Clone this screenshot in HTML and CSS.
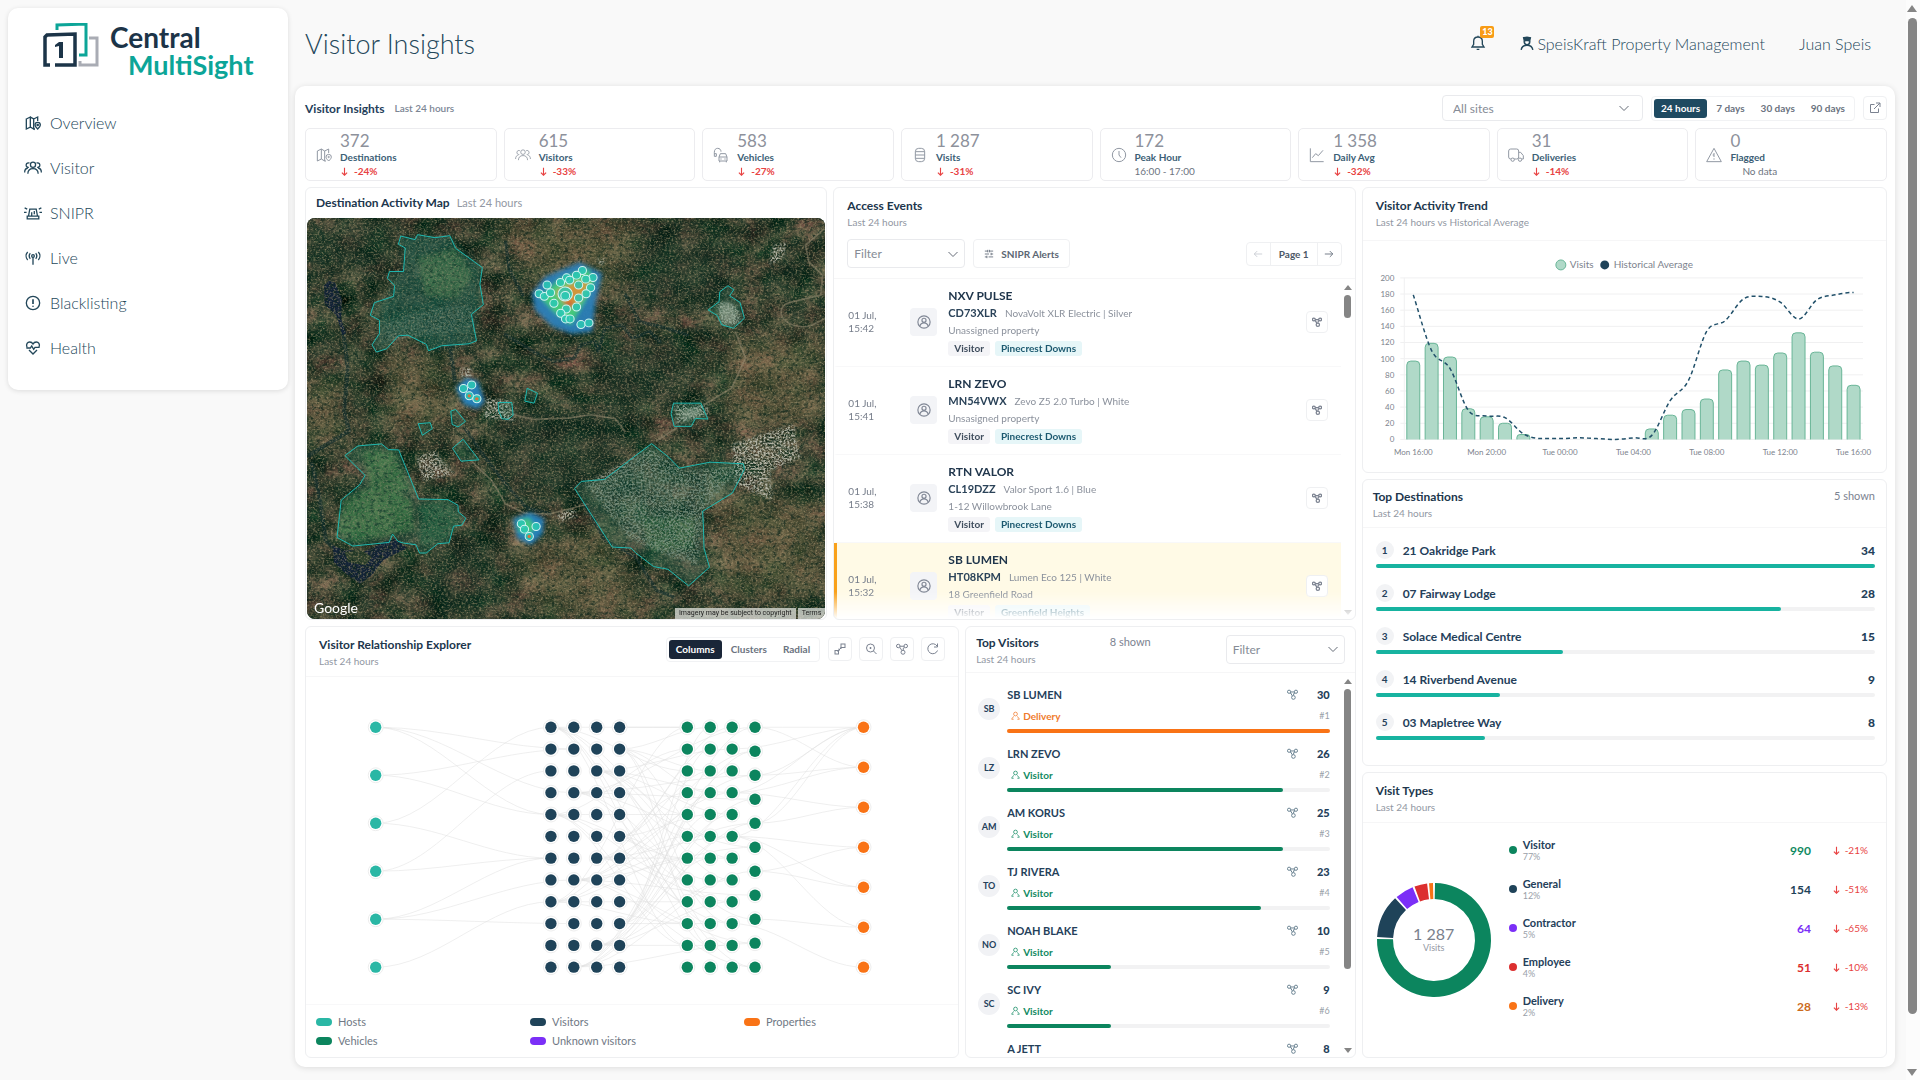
FILE: index.html
```html
<!DOCTYPE html>
<html lang="en">
<head>
  <meta charset="UTF-8">
  <title>Visitor Insights - Central MultiSight</title>
  <meta name="viewport" content="width=device-width, initial-scale=1.0">
  <link rel="stylesheet" href="styles.css">
</head>
<body>
  <!-- Icon sprite -->
  <svg class="sprite" aria-hidden="true">
    <symbol id="i-map" viewBox="0 0 24 24"><path d="M2 6l6-3v15l-6 3zM8 3l5 3v15l-5-3M13 6l6-3v6M13 21h2"/><path d="M19 21c-3-3-4-4.500-4-6a4 4 0 0 1 8 0c0 1.500-1 3-4 6z"/><circle cx="19" cy="15" r="1"/></symbol>
    <symbol id="i-users" viewBox="0 0 28 24"><circle cx="14" cy="7" r="4"/><path d="M6 21c0-5 3-8 8-8s8 3 8 8M7.500 11a3.500 3.500 0 1 1 1-6.500M20.500 11a3.500 3.500 0 1 0-1-6.500M1 19c0-4 2-6.500 5-7M27 19c0-4-2-6.500-5-7"/></symbol>
    <symbol id="i-siren" viewBox="0 0 28 24"><path d="M7 17l2-11h10l2 11M5 17h18v4H5zM1 4l4 2M27 4l-4 2M0 11h4M24 11h4M12 17v-6M16 9v5"/></symbol>
    <symbol id="i-live" viewBox="0 0 24 24"><circle cx="12" cy="9" r="2"/><path d="M12 11v11M8 13a5.500 5.500 0 0 1 0-8M16 13a5.500 5.500 0 0 0 0-8M4 15a9 9 0 0 1 0-12M20 15a9 9 0 0 0 0-12"/></symbol>
    <symbol id="i-alert" viewBox="0 0 24 24"><circle cx="12" cy="12" r="10"/><path d="M12 6.500v7M12 16v1.500" stroke-width="2.500"/></symbol>
    <symbol id="i-heart" viewBox="0 0 24 24"><path d="M3 11C1 6 4 3 7 3c2 0 4 1 5 3 1-2 3-3 5-3 3 0 6 3 4 8M6 15l6 6 6-6M2 12h6l2-3 3 5 2-3h7"/></symbol>
    <symbol id="i-bell" viewBox="0 0 24 24"><path d="M3 18h18l-2.500-4V9.500C18.500 5.500 16 3 12 3S5.500 5.500 5.500 9.500V14zM10 21.500h4M12 1v2"/></symbol>
    <symbol id="i-guard" viewBox="0 0 24 24"><path d="M6 2l6-1 6 1-1 4v3a5 5 0 0 1-10 0V6z" fill="currentColor"/><path d="M9 8h6v2a3 3 0 0 1-6 0z" fill="#fff" stroke="none"/><path d="M2 23c1-6 4-8 10-8s9 2 10 8" stroke-width="2.500"/></symbol>
    <symbol id="i-chevron" viewBox="0 0 24 24"><path d="M3 8l9 9 9-9"/></symbol>
    <symbol id="i-export" viewBox="0 0 24 24"><path d="M11 5H3v16h16v-8M14 2h8v8M22 2L10 14"/></symbol>
    <symbol id="i-car" viewBox="0 0 24 24"><path d="M2 14V8c0-4 2-6 5-6s5 2 5 5M2 14h3v-4H2M9 21v-6l2-5h8l2 5v6zM9 15h12M11 18h2M17 18h2M10 21v2M20 21v2"/></symbol>
    <symbol id="i-db" viewBox="0 0 24 24"><rect x="5" y="2" width="14" height="20" rx="5"/><path d="M5 7h14M5 12h14M5 17h14"/></symbol>
    <symbol id="i-clock" viewBox="0 0 24 24"><circle cx="12" cy="12" r="10"/><path d="M12 6v6l3 4"/></symbol>
    <symbol id="i-chart" viewBox="0 0 24 24"><path d="M2 2v20h20M5 16l5-6 4 3 7-8"/></symbol>
    <symbol id="i-truck" viewBox="0 0 24 24"><rect x="1" y="3" width="15" height="15" rx="3"/><path d="M16 8h3l4 5v5h-3"/><circle cx="7" cy="19" r="2.500" fill="#fff"/><circle cx="18" cy="19" r="2.500" fill="#fff"/></symbol>
    <symbol id="i-warn" viewBox="0 0 24 24"><path d="M12 2l11 20H1zM12 9v6M12 17v2M10 12h2"/></symbol>
    <symbol id="i-net" viewBox="0 0 24 24"><circle cx="4.500" cy="6" r="3.500"/><circle cx="19.500" cy="6" r="3.500"/><circle cx="14" cy="18.500" r="4"/><path d="M8 6.500h8M9 10.500l2.500 4.500M14.500 10.500V14M7 9.500l3 1M17 9.500l-3 1"/></symbol>
    <symbol id="i-person" viewBox="0 0 24 24"><circle cx="12" cy="8" r="5"/><path d="M2 22c1-4 3-6 6-7M22 22c-1-4-3-6-6-7M2 22h5M22 22h-5"/></symbol>
    <symbol id="i-avatar" viewBox="0 0 24 24"><circle cx="12" cy="12" r="10.500"/><circle cx="12" cy="9" r="3.500"/><path d="M5 19c1-4 3-5.500 7-5.500s6 1.500 7 5.500"/></symbol>
    <symbol id="i-down" viewBox="0 0 24 24"><path d="M12 2v19M5 15l7 7 7-7"/></symbol>
    <symbol id="i-left" viewBox="0 0 24 24"><path d="M22 12H3M10 5l-7 7 7 7"/></symbol>
    <symbol id="i-right" viewBox="0 0 24 24"><path d="M2 12h19M14 5l7 7-7 7"/></symbol>
    <symbol id="i-sliders" viewBox="0 0 24 24"><path d="M2 5h7M13 5h9M2 12h10M17 12h5M2 19h5M11 19h11M9 2v6M17 9v6M7 16v6M13 2v6"/></symbol>
    <symbol id="i-expand" viewBox="0 0 24 24"><rect x="14" y="2" width="8" height="7"/><rect x="2" y="15" width="7" height="7"/><path d="M9 15l5-5M10 11v5H6M14 12V8"/></symbol>
    <symbol id="i-zoom" viewBox="0 0 24 24"><circle cx="11" cy="10" r="8"/><path d="M17 16l6 6M11 8v4M9 10h4"/></symbol>
    <symbol id="i-refresh" viewBox="0 0 24 24"><path d="M20 6a10 10 0 1 0 1 9M21 1v7h-7"/></symbol>
  </svg>

  <div class="app">
    <aside class="sidebar">
      <a class="logo" href="#">
        <svg class="logo-mark" viewBox="0 0 56 45" aria-hidden="true">
          <path d="M46 15h8v27H37v-4" fill="none" stroke="#a9acb4" stroke-width="3"/>
          <path d="M14 7V2l29-1v31h-7" fill="none" stroke="#0ca598" stroke-width="3"/>
          <path d="M7 42H2V14l2-2 28-1v31H12" fill="none" stroke="#1c3448" stroke-width="3.500"/>
          <path d="M12 22l4-3h4v16h-4V23l-4 1z" fill="#1c3448"/>
        </svg>
        <span class="logo-text"><b>Central</b><b class="logo-sub">MultiSight</b></span>
      </a>
      <nav class="menu">
        <a href="#"><svg class="icon"><use href="#i-map"/></svg>Overview</a>
        <a href="#"><svg class="icon"><use href="#i-users"/></svg>Visitor</a>
        <a href="#"><svg class="icon"><use href="#i-siren"/></svg>SNIPR</a>
        <a href="#"><svg class="icon"><use href="#i-live"/></svg>Live</a>
        <a href="#"><svg class="icon"><use href="#i-alert"/></svg>Blacklisting</a>
        <a href="#"><svg class="icon"><use href="#i-heart"/></svg>Health</a>
      </nav>
    </aside>

    <div class="main">
      <header class="header">
        <h1>Visitor Insights</h1>
        <button class="bell" type="button" aria-label="Notifications"><svg class="icon"><use href="#i-bell"/></svg><span class="badge">13</span></button>
        <a class="company" href="#"><svg class="icon"><use href="#i-guard"/></svg>SpeisKraft Property Management</a>
        <a class="user" href="#">Juan Speis</a>
      </header>

      <main class="panel">
        <div class="toolbar">
          <h2>Visitor Insights</h2>
          <span class="toolbar-sub">Last 24 hours</span>
          <label class="select site-select"><select aria-label="Site"><option>All sites</option></select><svg class="icon"><use href="#i-chevron"/></svg></label>
          <div class="segmented">
            <button class="active" type="button">24 hours</button><button type="button">7 days</button><button type="button">30 days</button><button type="button">90 days</button>
          </div>
          <button class="icon-button" type="button" aria-label="Open"><svg class="icon"><use href="#i-export"/></svg></button>
        </div>

        <section class="stats" id="stats"></section>

        <div class="board">
          <div class="board-left">
            <div class="row-top">
              <!-- Map -->
              <section class="card map-card">
                <div class="map-head"><h3>Destination Activity Map</h3><span>Last 24 hours</span></div>
                <div class="map">
                  <svg class="map-svg" viewBox="0 0 521 403" preserveAspectRatio="xMidYMid slice" role="img" aria-label="Satellite map">
                    <defs>
                      <filter id="terrain" x="0" y="0" width="100%" height="100%" color-interpolation-filters="sRGB">
                        <feTurbulence type="fractalNoise" baseFrequency="0.035 0.045" numOctaves="7" seed="8"/>
                        <feColorMatrix values="0.75 0 0 0 -0.16  0.42 0.2 0 0 -0.06  0.38 0.1 0 0 -0.06  0 0 0 0 1"/>
                      </filter>
                      <filter id="grain" x="0" y="0" width="100%" height="100%" color-interpolation-filters="sRGB">
                        <feTurbulence type="fractalNoise" baseFrequency="0.45 0.55" numOctaves="4" seed="3"/>
                        <feColorMatrix values="0 0 0 0 0.62  0 0 0 0 0.56  0 0 0 0 0.42  2.4 0 0 0 -1.1"/>
                      </filter>
                      <filter id="shade" x="0" y="0" width="100%" height="100%" color-interpolation-filters="sRGB">
                        <feTurbulence type="fractalNoise" baseFrequency="0.22 0.3" numOctaves="4" seed="14"/>
                        <feColorMatrix values="0 0 0 0 0.05  0 0 0 0 0.15  0 0 0 0 0.11  3 0 0 0 -1.35"/>
                      </filter>
                      <filter id="ridges" x="0" y="0" width="100%" height="100%" color-interpolation-filters="sRGB">
                        <feTurbulence type="turbulence" baseFrequency="0.03 0.022" numOctaves="5" seed="21"/>
                        <feColorMatrix values="0 0 0 0 0.06  0 0 0 0 0.19  0 0 0 0 0.14  -5 0 0 0 1.1"/>
                      </filter>
                      <filter id="urban" x="-5%" y="-5%" width="110%" height="110%" color-interpolation-filters="sRGB">
                        <feGaussianBlur in="SourceGraphic" stdDeviation="4" result="area"/>
                        <feTurbulence type="fractalNoise" baseFrequency="0.17" numOctaves="3" seed="5"/>
                        <feColorMatrix values="0 0 0 0 0.7  0 0 0 0 0.7  0 0 0 0 0.64  3.5 0 0 0 -1.4"/>
                        <feComposite in2="area" operator="in"/>
                      </filter>
                      <filter id="soft" x="-30%" y="-30%" width="160%" height="160%"><feGaussianBlur stdDeviation="6"/></filter>
                      <filter id="wide" x="-30%" y="-30%" width="160%" height="160%"><feGaussianBlur stdDeviation="26"/></filter>
                    </defs>
                    <rect width="521" height="403" fill="#2c3a2b"/>
                    <rect width="521" height="403" filter="url(#terrain)"/>
                    <rect width="521" height="403" filter="url(#ridges)" opacity="0.6"/>
                    <g transform="translate(-7 -19) scale(0.3444 0.3333)" fill="none">
                      <g filter="url(#wide)" opacity="0.4">
                        <path d="M560 60h420l-60 240-260-90zM620 1080l260-100 160 280H700zM240 470h180l20 200-180 30zM1250 420h280v260h-280zM1200 900h330v300h-300zM20 540h110v200H20z" fill="#8a7450"/>
                        <path d="M560 620h420v280H620zM960 100h300v220H980zM380 1020h180v240H380zM20 60h260v160H20zM860 440h260v180H880z" fill="#0f2e20"/>
                      </g>
                      <g stroke="#15302f" stroke-linecap="round" stroke-linejoin="round" opacity="0.7">
                        <path d="M440 370l-2 80 14 100M125 390l14 120-10 130 14 60-120 75M35 800l20 90 20 140 40 40" stroke-width="12"/>
                        <path d="M480 690l60 90 60 80 60 70 70 20M830 920l60 110 90 50 60 100 50 20M950 290l40 80 80 20 60 20M600 410l80 50 60 30 60-10 20-40 40-10 10 30 20-70 50-10 30 40 50-20 30 30M600 130l10 80 40 80" stroke-width="10"/>
                      </g>
                      <g filter="url(#soft)">
                        <path d="M294 112l100 0 40 0 90 90-7 170-15 70-110 15-80-50-90 50 20-150 60-110z" fill="#1f4b3f" opacity="0.6"/>
                        <path d="M345 180l110-30 50 80-50 70-90-10z" fill="#7ba356" opacity="0.35"/>
                        <path d="M125 910l110-60 90 60 10 90-170 35-55-30zM180 760l100 0 40 120-110 10z" fill="#56904c" opacity="0.6"/>
                        <path d="M350 920l100 0 25 50-45 60-80 20z" fill="#2d6240" opacity="0.7"/>
                        <path d="M1000 960h150v100h-130zM450 740l60 40-50 0z" fill="#3b6f3c" opacity="0.5"/>
                      </g>
                      <path d="M70 262l14-15 18 6 20 50-2 60 14 40-10 8-18-60-34-32zM95 1045l30 12 60 8 60-30 30-10 38 28-70 36-34 46-34 26-40-30-36-34z" fill="#132337"/>
                      <path d="M130 1065l50-5 30 20-20 25-50-10z" fill="#2f422d"/>
                    </g>
                    <rect width="521" height="403" filter="url(#shade)" opacity="0.7"/>
                    <rect width="521" height="403" filter="url(#grain)" opacity="0.75"/>
                    <g transform="translate(-7 -19) scale(0.3444 0.3333)" fill="none">
                      <path d="M1530 90l-55 50 10 50 40 40-5 60-80 20c-60 10-40 70 20 75 40 5 50-20 90-30M620 650l60 15 100-4 70-10 70 12 30 40M500 790l60 60 40 70 60 30 70 0 110-30M1270 400l30 80-40 90-80 50M1040 730l60-40" stroke="#94896f" stroke-width="5" opacity="0.55"/>
                      <g fill="#fff" filter="url(#urban)">
                        <path d="M1260 740l180-60 20 100-90 40 10 90-110-50zM340 780l50-20 60 70-90 20zM545 600l70 10 10 60-90-10zM1090 620l100 0 0 30-90 30zM1215 310l60 10 15 60-60 0zM750 950l50-15 10 20-50 20zM1380 140l40-10-10 50-40 20zM470 510l30 0 0 30-30 0zM865 180l25 0-10 25z"/>
                      </g>
                      <path d="M1222 320l30-12 30 40-20 30-30-10zM1110 640l60-12 0 20-50 22z" fill="#b9b6a4" opacity="0.6" filter="url(#soft)"/>
                      <path d="M830 860l190-110 100 70 170-15-110 130-20 170-90-30-110-50z" fill="#fff" filter="url(#urban)" opacity="0.65"/>
                      <path d="M390 330l110-10 10 70-200 30-60 10-10-60z" fill="#fff" filter="url(#urban)" opacity="0.3"/>
                      <!-- Site boundaries -->
                      <g class="zone">
                        <path d="M294 112l42 11 7-15 51 9 43-6 17 38 78 58-7 50 10 62-35 29 15 80-22 9-80 6-38 15-6-19-54-28-28 2-34 39-30 10-13-22 22-34v-40l-27-15 12-38 56-19 3-33-21-22 6-20 41 0 5-71-20-11z"/>
                        <path d="M131 774l38-29 69-6 20 17 30 1 58 148 86 2 29 17 1 20 22 19-12 21-24 3-13 50-33 3-34 28-19 0-11-25-36-5-16-5-16-22-10 25-106 11-46-26 12-112 54-47 16-28z"/>
                        <path d="M801 873l20-21 67-6 138-108 50 41 31 33 90-18 97 5 3 17-35 71-87 55 2 37 2 74 16 58-61 56-60-50-42-8-53-42-13-14-55-3z"/>
                        <path d="M1191 335l32-25 2-30 24-18 17 12-12 18 30 20 13 48-32 30-34-10-13-28z"/>
                        <path d="M1090 616l80 0 20 48-36-2-12 24-50 0-9-38zM578 614l40 0 4 38-14 13-18-2-10-22zM663 571l30 15-10 30-27-6zM440 640l14-5 29 36-22 17-17-8zM345 678l35-3 6 18-29 20zM445 752l31-27 46 62-52 4z"/>
                      </g>
                      <!-- Activity heat -->
                      <g filter="url(#soft)">
                        <path d="M676 285l40-50 100-44 66 34-20 90-10 86-60 6-56-22-50-50z" fill="#2b7fb8" opacity="0.95"/>
                        <path d="M700 295l60-55 80-30 20 40-30 60-40 70-50-40z" fill="#43c97c"/>
                        <path d="M745 280l60-30 40 0-30 60-30 20z" fill="#d0963b"/>
                        <path d="M765 310l34 0-10 20z" fill="#d8452b"/>
                        <path d="M455 570l30-30 34 10 20 60-20 24-40-14zM622 965l50-20 40 20-4 44-34 34-40-20z" fill="#2780b8"/>
                        <path d="M638 970l30-8 20 30-20 20-30-10z" fill="#3fc581"/>
                      </g>
                      <g id="pins"></g>
                    </g>
                  </svg>
                  <span class="map-brand">Google</span>
                  <span class="map-note"><span>Imagery may be subject to copyright</span><a href="#">Terms</a></span>
                </div>
              </section>

              <!-- Events -->
              <section class="card events-card">
                <div class="events-head">
                  <h3>Access Events</h3>
                  <p>Last 24 hours</p>
                  <div class="events-tools">
                    <label class="select"><select aria-label="Filter events"><option>Filter</option></select><svg class="icon"><use href="#i-chevron"/></svg></label>
                    <button class="alerts" type="button"><svg class="icon"><use href="#i-sliders"/></svg>SNIPR Alerts</button>
                    <div class="pager">
                      <button type="button" aria-label="Previous" disabled><svg class="icon"><use href="#i-left"/></svg></button><span>Page 1</span><button type="button" aria-label="Next"><svg class="icon"><use href="#i-right"/></svg></button>
                    </div>
                  </div>
                </div>
                <div class="scroll-area events-area">
                  <div class="events" id="events"></div>
                  <div class="scrollbar"><i class="up"></i><i class="thumb"></i><i class="down"></i></div>
                </div>
              </section>
            </div>

            <div class="row-bottom">
              <!-- Relationship graph -->
              <section class="card explorer">
                <div class="card-head">
                  <div><h3>Visitor Relationship Explorer</h3><p>Last 24 hours</p></div>
                  <div class="explorer-tools">
                    <div class="segmented dark">
                      <button class="active" type="button">Columns</button><button type="button">Clusters</button><button type="button">Radial</button>
                    </div>
                    <button class="icon-button" type="button" aria-label="Expand"><svg class="icon"><use href="#i-expand"/></svg></button>
                    <button class="icon-button" type="button" aria-label="Zoom"><svg class="icon"><use href="#i-zoom"/></svg></button>
                    <button class="icon-button" type="button" aria-label="Network"><svg class="icon"><use href="#i-net"/></svg></button>
                    <button class="icon-button" type="button" aria-label="Refresh"><svg class="icon"><use href="#i-refresh"/></svg></button>
                  </div>
                </div>
                <svg class="graph" id="graph" viewBox="305 678 655 328"></svg>
                <ul class="graph-legend">
                  <li><i class="bg-host"></i>Hosts</li><li><i class="bg-navy"></i>Visitors</li><li><i class="bg-orange"></i>Properties</li>
                  <li><i class="bg-green"></i>Vehicles</li><li><i class="bg-purple"></i>Unknown visitors</li>
                </ul>
              </section>

              <!-- Top visitors -->
              <section class="card visitors-card">
                <div class="card-head visitors-head">
                  <div><h3>Top Visitors</h3><p>Last 24 hours</p></div>
                  <span class="shown">8 shown</span>
                  <label class="select"><select aria-label="Filter visitors"><option>Filter</option></select><svg class="icon"><use href="#i-chevron"/></svg></label>
                </div>
                <div class="scroll-area">
                  <div class="visitors" id="visitors"></div>
                  <div class="scrollbar visitors-scroll"><i class="up"></i><i class="thumb"></i><i class="down"></i></div>
                </div>
              </section>
            </div>
          </div>

          <div class="board-right">
            <section class="card">
              <div class="card-head trend-head"><div><h3>Visitor Activity Trend</h3><p>Last 24 hours vs Historical Average</p></div></div>
              <svg class="trend" id="trend" viewBox="1363 240 524 232"></svg>
            </section>

            <section class="card">
              <div class="card-head dest-head"><div><h3>Top Destinations</h3><p>Last 24 hours</p></div><span class="shown">5 shown</span></div>
              <ol class="destinations" id="destinations"></ol>
            </section>

            <section class="card">
              <div class="card-head"><div><h3>Visit Types</h3><p>Last 24 hours</p></div></div>
              <div class="types">
                <div class="donut">
                  <svg id="donut" viewBox="-58 -58 116 116"></svg>
                  <div class="donut-label"><b>1 287</b><span>Visits</span></div>
                </div>
                <ul class="type-list" id="types"></ul>
              </div>
            </section>
          </div>
        </div>
      </main>
    </div>
  </div>
  <div class="scrollbar page-scroll"><i class="up"></i><i class="thumb"></i><i class="down"></i></div>

  <script src="script.js"></script>
</body>
</html>
```

FILE: styles.css
```css
html, body {
  margin: 0;
  padding: 0;
  box-sizing: border-box;
  font-family: Lato, 'Open Sans', sans-serif;
  color: #24405a;
  background-color: #f9f9f9;
}
*, *::before, *::after {
  box-sizing: border-box;
}
body {
  display: flex;
  height: 100vh;
  min-height: 900px;
  overflow: hidden;
}
h1, h2, h3, p, ul, ol {
  margin: 0;
  padding: 0;
}
ul, ol {
  list-style: none;
}
a {
  color: inherit;
  text-decoration: none;
}
button, select {
  font-family: inherit;
  color: inherit;
  margin: 0;
}
button {
  display: flex;
  align-items: center;
  justify-content: center;
  border: 0;
  padding: 0;
  background: none;
}
.sprite {
  position: absolute;
  width: 0;
  height: 0;
}
.icon {
  width: 12px;
  height: 12px;
  flex: none;
  fill: none;
  stroke: currentColor;
  stroke-width: 2;
}

/* Layout */
.app {
  flex: 1;
  min-width: 0;
  display: flex;
  align-items: flex-start;
  gap: 7px;
  padding: 8px 11px 13px 8px;
}
.main {
  flex: 1;
  min-width: 0;
  height: 100%;
  display: flex;
  flex-direction: column;
}
.sidebar {
  width: 280px;
  flex: none;
  padding: 15px 0 20px;
  border-radius: 10px;
  background: #fff;
  box-shadow: 0 1px 5px rgba(0, 0, 0, 0.12);
}
.logo {
  display: flex;
  gap: 11px;
  padding-left: 35px;
  margin-bottom: 21px;
}
.logo-mark {
  width: 56px;
  height: 45px;
}
.logo-text {
  font-size: 28px;
  line-height: 28px;
  color: #1c3448;
}
.logo-text b {
  display: block;
}
.logo-sub {
  padding-left: 18px;
  font-size: 27px;
  color: #0ca598;
}
.menu a {
  display: flex;
  align-items: center;
  gap: 8px;
  height: 45px;
  padding-left: 16px;
  font-size: 16px;
  font-weight: 300;
  color: #23475a;
}
.menu .icon {
  width: 18px;
  height: 16px;
}

/* Header */
.header {
  display: flex;
  align-items: center;
  height: 70px;
  margin-bottom: 8px;
  padding: 0 24px 0 10px;
  font-size: 16px;
  font-weight: 300;
  color: #23475a;
}
.header h1 {
  margin-right: auto;
  font-size: 27px;
  font-weight: 300;
}
.bell {
  position: relative;
  margin-right: 34px;
}
.bell .icon {
  width: 16px;
  height: 16px;
}
.badge {
  position: absolute;
  left: 10px;
  top: -9px;
  width: 14px;
  height: 12px;
  border-radius: 2px;
  background: #f89c16;
  color: #fff;
  font-size: 9px;
  line-height: 12px;
  font-weight: 900;
}
.company {
  display: flex;
  align-items: center;
  gap: 3px;
  margin-right: 34px;
}
.company .icon {
  width: 14px;
  height: 15px;
}

/* Panel */
.panel {
  flex: 1;
  min-height: 0;
  display: flex;
  flex-direction: column;
  padding: 9px 8px 9px 10px;
  border-radius: 10px;
  background: #fff;
  box-shadow: 0 1px 6px rgba(0, 0, 0, 0.12);
}
.toolbar {
  display: flex;
  align-items: center;
  height: 26px;
  margin-bottom: 7px;
}
.toolbar h2 {
  font-size: 12px;
  font-weight: 700;
}
.toolbar-sub {
  margin: 0 auto 0 10px;
  font-size: 10px;
  font-weight: 600;
  color: #7c8594;
}
h3 {
  font-size: 12px;
  line-height: 16px;
  font-weight: 700;
  color: #20364c;
}
h3 + p, .map-head span {
  font-size: 10px;
  line-height: 16px;
  color: #9298a3;
}
.select {
  display: grid;
  align-items: center;
}
.select select, .select .icon {
  grid-area: 1 / 1;
}
.select select {
  appearance: none;
  width: 100%;
  height: 29px;
  padding: 0 24px 0 6px;
  border: 1px solid #e9eaed;
  border-radius: 4px;
  background: #fff;
  font-size: 12px;
  color: #868c96;
}
.select .icon {
  justify-self: end;
  margin-right: 6px;
  color: #666d78;
  pointer-events: none;
}
.site-select {
  width: 201px;
  margin-right: 8px;
}
.site-select select {
  height: 26px;
  padding-left: 10px;
}
.site-select .icon {
  margin-right: 13px;
}
.segmented {
  display: flex;
  gap: 2px;
  padding: 2px;
  border: 1px solid #f1f2f4;
  border-radius: 4px;
  margin-right: 8px;
}
.segmented button {
  height: 19px;
  padding: 0 7px;
  border-radius: 3px;
  font-size: 10px;
  font-weight: 700;
  color: #6b7380;
}
.segmented .active {
  background: #1f4a61;
  color: #fff;
}
.dark .active {
  background: #1a2638;
}
.icon-button {
  width: 24px;
  height: 24px;
  border: 1px solid #eff0f2;
  border-radius: 4px;
  color: #7b8290;
}

/* Stat cards */
.stats {
  display: grid;
  grid-template-columns: repeat(8, 1fr);
  gap: 7px;
  margin-bottom: 6px;
}
.stat {
  display: flex;
  align-items: center;
  gap: 8px;
  height: 53px;
  padding-left: 10px;
  border: 1px solid #ececef;
  border-radius: 5px;
}
.stat .icon {
  width: 16px;
  height: 16px;
  stroke-width: 1.5;
  color: #9198a3;
}
.stat b {
  display: block;
  font-size: 17px;
  line-height: 18px;
  font-weight: 400;
  color: #8d919b;
}
.stat span {
  display: block;
  font-size: 10px;
  line-height: 15px;
  font-weight: 700;
  color: #3c6076;
}
.stat small {
  display: flex;
  align-items: center;
  font-size: 10px;
  line-height: 12px;
  color: #6d7480;
}
.stat .delta {
  gap: 5px;
  font-weight: 700;
}
.stat .delta, .type-delta {
  color: #e84343;
}
.stat .delta .icon, .type-delta .icon {
  width: 9px;
  height: 9px;
  stroke-width: 3;
  color: inherit;
}
.stat .indent {
  padding-left: 12px;
}

/* Board */
.board {
  flex: 1;
  min-height: 0;
  display: grid;
  grid-template-columns: 2fr 1fr;
  gap: 6px;
}
.board-left, .board-right {
  min-width: 0;
  min-height: 0;
  display: grid;
  gap: 6px;
}
.board-left {
  grid-template-rows: repeat(2, minmax(0, 1fr));
}
.board-right {
  grid-template-rows: repeat(3, minmax(0, 1fr));
}
.row-top, .row-bottom {
  display: grid;
  gap: 6px;
  min-height: 0;
}
.row-top {
  grid-template-columns: 1fr 1fr;
}
.row-bottom {
  grid-template-columns: 67fr 40fr;
}
.card {
  display: flex;
  flex-direction: column;
  min-width: 0;
  min-height: 0;
  overflow: hidden;
  border: 1px solid #eeeff1;
  border-radius: 6px;
  background: #fff;
}
.card-head {
  display: flex;
  justify-content: space-between;
  height: 50px;
  flex: none;
  padding: 10px 13px 0;
  border-bottom: 1px solid #f6f6f7;
}
.shown {
  font-size: 11px;
  color: #7c8391;
}

/* Map */
.map-card {
  padding: 0 1px;
}
.map-head {
  display: flex;
  align-items: center;
  gap: 7px;
  height: 30px;
  flex: none;
  padding-left: 9px;
}
.map-head span {
  font-size: 11px;
}
.map {
  position: relative;
  flex: 1;
  min-height: 0;
  border-radius: 8px;
  overflow: hidden;
}
.map-svg {
  display: block;
  width: 100%;
  height: 100%;
}
.zone path {
  fill: #1f7a66;
  fill-opacity: 0.22;
  stroke: #1fb8b0;
  stroke-width: 1;
  vector-effect: non-scaling-stroke;
}
.pin {
  fill: #2cc8b4;
  fill-opacity: 0.85;
  stroke: #d4f3f2;
  stroke-width: 3;
}
.pin-core {
  fill: #d8703c;
}
.map-brand {
  position: absolute;
  left: 7px;
  bottom: 3px;
  font-size: 14px;
  color: #fff;
}
.map-note {
  position: absolute;
  right: 0;
  bottom: 0;
  display: flex;
  gap: 2px;
  font: 7px/11px Roboto, sans-serif;
  color: #222;
}
.map-note > * {
  padding: 0 4px;
  background: rgba(214, 216, 210, 0.8);
}

/* Access events */
.events-head {
  flex: none;
  height: 91px;
  padding: 10px 13px 0;
  border-bottom: 1px solid #f6f6f7;
}
.events-tools {
  display: flex;
  align-items: center;
  gap: 8px;
  margin-top: 9px;
}
.events-tools .select {
  width: 118px;
}
.alerts {
  gap: 7px;
  height: 29px;
  padding: 0 10px;
  border: 1px solid #eff0f2;
  border-radius: 4px;
  font-size: 10px;
  font-weight: 700;
  color: #5c6673;
}
.alerts .icon {
  width: 10px;
  height: 10px;
}
.pager {
  display: flex;
  align-items: stretch;
  height: 24px;
  margin-left: auto;
  border: 1px solid #eff0f2;
  border-radius: 4px;
}
.pager button {
  width: 23px;
  color: #5c6673;
}
.pager button:disabled {
  color: #c5c9d0;
}
.pager .icon {
  width: 10px;
  height: 10px;
}
.pager span {
  padding: 0 8px;
  border: solid #eff0f2;
  border-width: 0 1px;
  font-size: 10px;
  line-height: 22px;
  font-weight: 700;
  color: #4c5866;
}
.scroll-area {
  flex: 1;
  min-height: 0;
  display: flex;
}
.events-area {
  mask-image: linear-gradient(#000 92%, transparent);
}
.events, .visitors {
  flex: 1;
  min-width: 0;
  overflow: hidden;
}
.event {
  display: flex;
  align-items: center;
  height: 88px;
  border-bottom: 1px solid #f8f8f9;
  padding: 0 13px 2px 11px;
  border-left: 3px solid transparent;
}
.event.flagged {
  background: #fffae6;
  border-left-color: #f9a11b;
}
.event time {
  width: 62px;
  font-size: 10px;
  line-height: 13px;
  color: #767d8a;
}
.event time span {
  display: block;
}
.event-avatar {
  display: flex;
  align-items: center;
  justify-content: center;
  width: 27px;
  height: 28px;
  margin-right: 11px;
  border-radius: 4px;
  background: #f3f4f7;
  color: #808795;
}
.event-avatar .icon {
  width: 14px;
  height: 14px;
}
.event-body {
  flex: 1;
  font-size: 10px;
  line-height: 17px;
  color: #8b919c;
}
.event-body h4 {
  margin: 0;
  font-size: 12px;
  font-weight: 700;
  color: #20364c;
}
.event-body p b {
  margin-right: 8px;
  font-size: 11px;
  font-weight: 700;
  color: #2b4359;
}
.tags {
  display: flex;
  gap: 5px;
  margin-top: 2px;
}
.tags span {
  padding: 0 6px;
  border-radius: 3px;
  background: #f4f4f7;
  font-size: 10px;
  line-height: 15px;
  font-weight: 700;
  color: #3f4d5d;
}
.tags .site {
  background: #e6f6f8;
  color: #1d5a70;
}
.event .icon-button {
  width: 22px;
  height: 22px;
  background: #fff;
}
.event .icon-button .icon {
  width: 10px;
  height: 10px;
  stroke-width: 3;
}

/* Scrollbars */
.scrollbar {
  display: flex;
  flex-direction: column;
  align-items: center;
  width: 14px;
  padding: 6px 0 4px;
}
.scrollbar .up, .scrollbar .down {
  border: solid transparent;
  border-width: 0 4px 5px;
  border-bottom-color: #858585;
}
.scrollbar .down {
  border-width: 5px 4px 0;
  border-top-color: #858585;
  margin-top: auto;
}
.scrollbar .thumb {
  width: 7px;
  height: 7%;
  margin-top: 5px;
  border-radius: 4px;
  background: #858585;
}
.visitors-scroll .thumb {
  height: 75%;
}
.page-scroll {
  padding: 5px 3px 4px 1px;
  background: #fcfcfc;
}
.page-scroll .up, .page-scroll .down {
  border-left-width: 5px;
  border-right-width: 5px;
}
.page-scroll .up {
  border-bottom-width: 7px;
}
.page-scroll .down {
  border-top-width: 7px;
}
.page-scroll .thumb {
  width: 9px;
  height: 93%;
  margin-top: 6px;
  border-radius: 5px;
}

/* Relationship explorer */
.explorer-tools {
  display: flex;
  gap: 7px;
}
.explorer-tools .segmented {
  margin-right: 1px;
  height: 25px;
}
.graph {
  flex: 1;
  min-height: 0;
  width: 100%;
}
.link {
  fill: none;
  stroke: #dedede;
  stroke-opacity: 0.5;
  stroke-width: 1;
}
.halo {
  fill: #fff;
  stroke: #ededed;
  stroke-width: 1;
}
.graph-legend {
  display: grid;
  grid-template-columns: repeat(3, 1fr);
  padding: 7px 0 7px 10px;
  border-top: 1px solid #f8f8f9;
  font-size: 11px;
  line-height: 19px;
  color: #6f7884;
}
.graph-legend i {
  display: inline-block;
  width: 16px;
  height: 8px;
  margin-right: 6px;
  border-radius: 4px;
}
.bg-host { background: #2ab7a5; }
.bg-navy { background: #1f4359; }
.bg-orange { background: #f97316; }
.bg-green { background: #0c855e; }
.bg-purple { background: #7b2ff7; }
.bg-red { background: #dc2f2f; }
.fill-host { fill: #2ab7a5; }
.fill-navy { fill: #1f4359; }
.fill-orange { fill: #f97316; }
.fill-green { fill: #0c855e; }
.fill-purple { fill: #7b2ff7; }
.fill-red { fill: #dc2f2f; }

/* Top visitors */
.visitors-head {
  height: 46px;
  padding: 8px 10px 0;
}
.visitors-head .shown {
  margin-left: -4px;
}
.visitors-head .select {
  width: 119px;
  height: 29px;
}
.visitors {
  padding: 10px 11px 0 12px;
}
.visitor {
  display: flex;
  gap: 7px;
  height: 59px;
  padding-top: 4px;
}
.visitor-avatar {
  width: 22px;
  height: 22px;
  margin-top: 11px;
  border-radius: 50%;
  background: #f1f2f5;
  font-size: 9px;
  line-height: 22px;
  font-weight: 700;
  text-align: center;
}
.visitor-avatar:empty {
  background: none;
}
.visitor-body {
  flex: 1;
}
.visitor-line {
  display: flex;
  align-items: center;
  height: 16px;
  margin-bottom: 5px;
  font-size: 11px;
  font-weight: 700;
}
.visitor-line .icon {
  margin-left: auto;
  width: 11px;
  height: 11px;
  color: #5f7a8a;
}
.visitor-line b {
  width: 32px;
  font-size: 11px;
  text-align: right;
}
.visitor-line .visitor-type {
  display: flex;
  align-items: center;
  gap: 3px;
  padding-left: 4px;
  font-size: 10px;
  color: #108a62;
}
.visitor-line .visitor-type .icon {
  width: 9px;
  height: 9px;
  color: inherit;
}
.visitor-line .delivery {
  color: #f07a2c;
}
.rank {
  margin-left: auto;
  font-size: 9px;
  font-weight: 400;
  color: #999fa9;
}
.track {
  height: 4px;
  border-radius: 2px;
  background: #f2f2f3;
}
.track i {
  display: block;
  height: 4px;
  border-radius: 2px;
}

/* Trend chart */
.trend-head {
  height: 53px;
}
.trend {
  flex: 1;
  min-height: 0;
  width: 100%;
}
.trend text {
  font-size: 8px;
  fill: #7d838d;
}
.trend .legend-text {
  font-size: 10px;
}
.grid-line {
  stroke: #f0f0f1;
}
.bar {
  fill: #b0d9c8;
  stroke: #68b597;
}
.average {
  fill: none;
  stroke: #21506a;
  stroke-width: 1.5;
  stroke-dasharray: 4 3;
}

/* Top destinations */
.dest-head {
  height: 48px;
  padding: 9px 11px 0 10px;
}
.destinations {
  padding: 8px 11px 0 13px;
}
.destination {
  height: 43px;
}
.destination div:first-child {
  display: flex;
  align-items: center;
  gap: 9px;
  height: 28px;
  font-size: 12px;
  font-weight: 700;
}
.destination .number {
  width: 18px;
  height: 18px;
  border-radius: 50%;
  background: #f2f3f5;
  font-size: 10px;
  line-height: 18px;
  text-align: center;
}
.destination b {
  margin-left: auto;
  font-size: 12px;
}
.destination i {
  background: #17b3a0;
}

/* Visit types */
.types {
  flex: 1;
  display: flex;
  align-items: center;
  gap: 17px;
  padding: 0 18px 0 13px;
}
.donut {
  display: grid;
  width: 116px;
  flex: none;
}
.donut svg, .donut-label {
  grid-area: 1 / 1;
}
.donut-label {
  align-self: center;
  text-align: center;
}
.donut-label b {
  display: block;
  font-size: 16px;
  font-weight: 400;
  line-height: 16px;
  color: #7a818c;
}
.donut-label span {
  display: block;
  font-size: 9px;
  line-height: 12px;
  color: #949aa4;
}
.type-list {
  flex: 1;
  align-self: flex-start;
  padding-top: 8px;
}
.type {
  display: flex;
  align-items: center;
  height: 39px;
}
.type > i {
  width: 8px;
  height: 8px;
  margin-right: 6px;
  border-radius: 50%;
}
.type div {
  font-size: 11px;
  line-height: 13px;
  font-weight: 700;
}
.type small {
  display: block;
  font-size: 9px;
  line-height: 12px;
  font-weight: 400;
  color: #9a9fa9;
}
.type b {
  margin-left: auto;
  font-size: 12px;
}
.type-delta {
  display: flex;
  align-items: center;
  justify-content: flex-end;
  gap: 4px;
  width: 57px;
  font-size: 10px;
}
.text-green { color: #108a62; }
.text-navy { color: #1f4359; }
.text-purple { color: #7b2ff7; }
.text-red { color: #dc2f2f; }
.text-orange { color: #cc6a1c; }
```

FILE: script.js
```js
const byId = id => document.getElementById(id);
const icon = name => `<svg class="icon"><use href="#i-${name}"/></svg>`;

// Stat cards
const stats = [
  ['map', '372', 'Destinations', '-24%'],
  ['users', '615', 'Visitors', '-33%'],
  ['car', '583', 'Vehicles', '-27%'],
  ['db', '1 287', 'Visits', '-31%'],
  ['clock', '172', 'Peak Hour', '16:00 - 17:00'],
  ['chart', '1 358', 'Daily Avg', '-32%'],
  ['truck', '31', 'Deliveries', '-14%'],
  ['warn', '0', 'Flagged', 'No data']
];
byId('stats').innerHTML = stats.map(([ic, value, label, note]) => {
  const down = note.startsWith('-');
  const cls = down ? 'delta' : note === 'No data' ? 'indent' : '';
  return `<div class="stat">${icon(ic)}<div><b>${value}</b><span>${label}</span><small class="${cls}">${down ? icon('down') : ''}${note}</small></div></div>`;
}).join('');

// Map pins: x, y, has hot core
const pins = [
  [824, 216], [855, 237], [834, 242], [807, 230], [778, 238], [787, 245], [760, 252], [721, 260], [813, 260],
  [698, 286], [713, 294], [731, 283], [848, 268], [835, 286], [813, 299], [741, 315], [807, 326], [777, 332],
  [761, 345], [775, 362], [788, 362], [820, 379], [843, 374],
  [501, 561], [477, 572], [494, 594, 1], [516, 603, 1], [646, 980], [655, 996], [689, 988], [669, 1018, 1]
];
byId('pins').innerHTML = '<circle class="pin" cx="774" cy="287" r="21"/><circle class="pin" cx="774" cy="292" r="13"/>' +
  pins.map(([x, y, hot]) => `<circle class="pin" cx="${x}" cy="${y}" r="12"/>` + (hot ? `<circle class="pin-core" cx="${x}" cy="${y}" r="5"/>` : '')).join('');

// Access events
const events = [
  ['15:42', 'NXV PULSE', 'CD73XLR', 'NovaVolt XLR Electric | Silver', 'Unassigned property', 'Pinecrest Downs'],
  ['15:41', 'LRN ZEVO', 'MN54VWX', 'Zevo Z5 2.0 Turbo | White', 'Unsasigned property', 'Pinecrest Downs'],
  ['15:38', 'RTN VALOR', 'CL19DZZ', 'Valor Sport 1.6 | Blue', '1-12 Willowbrook Lane', 'Pinecrest Downs'],
  ['15:32', 'SB LUMEN', 'HT08KPM', 'Lumen Eco 125 | White', '18 Greenfield Road', 'Greenfield Heights']
];
byId('events').innerHTML = events.map(([time, name, plate, car, place, site], i) => `
  <article class="event${i === 3 ? ' flagged' : ''}">
    <time><span>01 Jul,</span><span>${time}</span></time>
    <div class="event-avatar">${icon('avatar')}</div>
    <div class="event-body">
      <h4>${name}</h4>
      <p><b>${plate}</b>${car}</p>
      <p>${place}</p>
      <div class="tags"><span>Visitor</span><span class="site">${site}</span></div>
    </div>
    <button class="icon-button" type="button" aria-label="Show links">${icon('net')}</button>
  </article>`).join('');

// Top visitors, the last row only has its first line loaded
const visitors = [
  ['SB', 'SB LUMEN', 30, 100], ['LZ', 'LRN ZEVO', 26, 85.5], ['AM', 'AM KORUS', 25, 85.5], ['TO', 'TJ RIVERA', 23, 78.6],
  ['NO', 'NOAH BLAKE', 10, 32.3], ['SC', 'SC IVY', 9, 32.3], ['', 'A JETT', 8, 0]
];
byId('visitors').innerHTML = visitors.map(([short, name, count, width], i) => `
  <div class="visitor">
    <div class="visitor-avatar">${short}</div>
    <div class="visitor-body">
      <div class="visitor-line">${name}${icon('net')}<b>${count}</b></div>
      ${width ? `<div class="visitor-line"><span class="visitor-type${i ? '' : ' delivery'}">${icon('person')}${i ? 'Visitor' : 'Delivery'}</span><span class="rank">#${i + 1}</span></div>
      <div class="track"><i class="${i ? 'bg-green' : 'bg-orange'}" style="width:${width}%"></i></div>` : ''}
    </div>
  </div>`).join('');

// Top destinations
const destinations = [
  ['21 Oakridge Park', 34, 100], ['07 Fairway Lodge', 28, 81.2], ['Solace Medical Centre', 15, 37.6],
  ['14 Riverbend Avenue', 9, 25], ['03 Mapletree Way', 8, 21.8]
];
byId('destinations').innerHTML = destinations.map(([name, count, width], i) => `
  <li class="destination">
    <div><span class="number">${i + 1}</span>${name}<b>${count}</b></div>
    <div class="track"><i style="width:${width}%"></i></div>
  </li>`).join('');

// Visit types
const types = [
  ['green', 'Visitor', '77%', 990, '-21%', 1, 271],
  ['navy', 'General', '12%', 154, '-51%', 273, 317],
  ['purple', 'Contractor', '5%', 64, '-65%', 319, 338],
  ['red', 'Employee', '4%', 51, '-10%', 340, 353],
  ['orange', 'Delivery', '2%', 28, '-13%', 355, 359]
];
byId('types').innerHTML = types.map(([color, name, share, count, delta]) => `
  <li class="type"><i class="bg-${color}"></i><div>${name}<small>${share}</small></div><b class="text-${color}">${count}</b><span class="type-delta">${icon('down')}${delta}</span></li>`).join('');

const polar = (deg, r) => {
  const a = deg * Math.PI / 180;
  return `${(r * Math.sin(a)).toFixed(1)} ${(-r * Math.cos(a)).toFixed(1)}`;
};
byId('donut').innerHTML = types.map(([color, , , , , from, to]) => {
  const large = to - from > 180 ? 1 : 0;
  return `<path class="fill-${color}" d="M${polar(from, 57)}A57 57 0 ${large} 1 ${polar(to, 57)}L${polar(to, 41)}A41 41 0 ${large} 0 ${polar(from, 41)}z"/>`;
}).join('');

// Trend chart
const visits = [97, 119, 102, 38, 28, 20, 6, 0, 0, 0, 0, 0, 0, 13, 30, 37, 50, 86, 97, 92, 107, 132, 108, 91, 67];
const average = [179, 110, 88, 36, 29, 27, 7, 1, 1, 2, 1, 0, 2, 5, 48, 73, 134, 147, 174, 177, 170, 149, 173, 179, 182];
const hours = ['Mon 16:00', 'Mon 20:00', 'Tue 00:00', 'Tue 04:00', 'Tue 08:00', 'Tue 12:00', 'Tue 16:00'];
const cx = i => 1413 + i * 18.4;
const cy = v => 439 - v * 0.81;
let trend = `<circle class="bar" cx="1561" cy="264" r="5"/><text class="legend-text" x="1570" y="267">Visits</text>
  <circle class="fill-navy" cx="1605" cy="264" r="4.5"/><text class="legend-text" x="1614" y="267">Historical Average</text>`;
for (let v = 0; v <= 200; v += 20) {
  trend += `<path class="grid-line" d="M1400 ${cy(v)}H1864"/><text x="1394" y="${cy(v) + 3}" text-anchor="end">${v}</text>`;
}
trend += '<path class="grid-line" d="M1404 277V439"/>';
visits.forEach((v, i) => {
  if (!v) return;
  const x = cx(i) - 6.5, r = Math.min(4, v / 2);
  trend += `<path class="bar" d="M${x} 439V${cy(v) + r}q0 ${-r} ${r} ${-r}h${13 - 2 * r}q${r} 0 ${r} ${r}V439"/>`;
});
let line = `M${cx(0)} ${cy(average[0])}`;
for (let i = 1; i < average.length; i++) {
  // Horizontal tangents only at local turning points
  const slope = k => k <= 0 || k >= average.length - 1 || (average[k] - average[k - 1]) * (average[k + 1] - average[k]) <= 0
    ? 0 : (cy(average[k + 1]) - cy(average[k - 1])) / 6;
  const s0 = i === 1 ? (cy(average[1]) - cy(average[0])) / 3 : slope(i - 1);
  line += `C${cx(i - 1) + 6} ${cy(average[i - 1]) + s0} ${cx(i) - 6} ${cy(average[i]) - slope(i)} ${cx(i)} ${cy(average[i])}`;
}
trend += `<path class="average" d="${line}"/>`;
hours.forEach((h, i) => { trend += `<text x="${cx(i * 4)}" y="455" text-anchor="middle">${h}</text>`; });
byId('trend').innerHTML = trend;

// Relationship graph
const column = (x, count) => Array.from({ length: count }, (_, i) => [x, 728 + i * 241 / (count - 1)]);
const hosts = column(375, 6);
const people = [551, 574, 597, 620].map(x => column(x, 12));
const vehicles = [688, 711, 733].map(x => column(x, 12)).concat([column(756, 11)]);
const properties = column(865, 7);
const link = ([x1, y1], [x2, y2]) => {
  const bend = (x2 - x1) * 0.35;
  return `<path class="link" d="M${x1} ${y1}C${x1 + bend} ${y1} ${x2 - bend} ${y2} ${x2} ${y2}"/>`;
};
let graph = '';
[[0, 1], [0, 3], [0, 4], [1, 1], [1, 4], [2, 0], [2, 6], [3, 2], [3, 6], [4, 6], [4, 9], [4, 7], [5, 8]].forEach(([h, p]) => {
  graph += link(hosts[h], people[p % 2][p]);
});
for (let i = 0; i < 75; i++) {
  graph += link(people[i % 4][(i * 7) % 12], vehicles[(i * 3) % 4][(i * 5 + (i >> 2)) % 11]);
}
graph += link(people[3][0], vehicles[0][0]);
[[0, 0], [1, 0], [2, 0], [3, 0], [4, 0], [5, 0], [0, 1], [2, 1], [3, 1], [3, 2], [4, 2], [5, 3], [6, 3], [5, 4], [6, 4], [5, 5], [8, 5], [9, 6]].forEach(([v, p]) => {
  graph += link(vehicles[v % 2 ? 2 : 3][v], properties[p]);
});
const dots = (nodes, color) => {
  nodes.forEach(([x, y]) => {
    graph += `<circle class="halo" cx="${x}" cy="${y}" r="7.5"/><circle class="fill-${color}" cx="${x}" cy="${y}" r="5.7"/>`;
  });
};
dots(hosts, 'host');
people.forEach(c => dots(c, 'navy'));
vehicles.forEach(c => dots(c, 'green'));
dots(properties, 'orange');
byId('graph').innerHTML = graph;
```
